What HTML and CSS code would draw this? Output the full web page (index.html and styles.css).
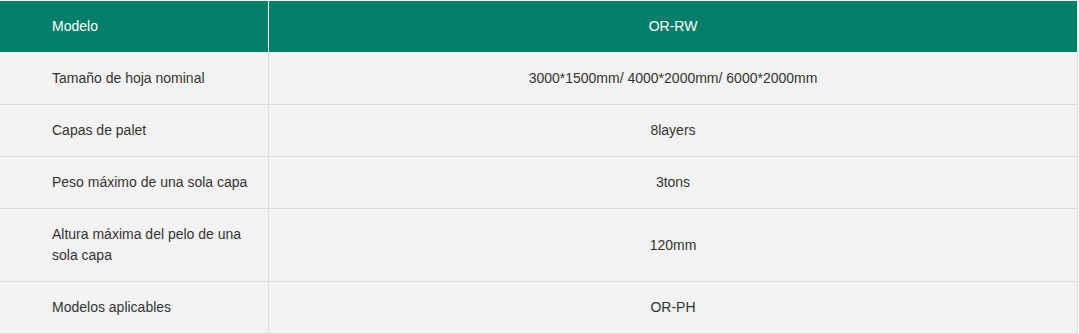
FILE: index.html
```html
<!DOCTYPE html>
<html lang="es">
<head>
<meta charset="utf-8">
<link rel="stylesheet" href="styles.css">
</head>
<body>
<table class="spec">
  <thead>
    <tr><th class="label">Modelo</th><th class="value">OR-RW</th></tr>
  </thead>
  <tbody>
    <tr><td class="label">Tamaño de hoja nominal</td><td class="value">3000*1500mm/ 4000*2000mm/ 6000*2000mm</td></tr>
    <tr><td class="label">Capas de palet</td><td class="value">8layers</td></tr>
    <tr><td class="label">Peso máximo de una sola capa</td><td class="value">3tons</td></tr>
    <tr><td class="label">Altura máxima del pelo de una sola capa</td><td class="value">120mm</td></tr>
    <tr><td class="label">Modelos aplicables</td><td class="value">OR-PH</td></tr>
  </tbody>
</table>
</body>
</html>
```
FILE: styles.css
```css
html, body {
  margin: 0;
  padding: 0;
  background: #ffffff;
}
.spec {
  width: 1078px;
  border-collapse: collapse;
  font-family: "Liberation Sans", Arial, sans-serif;
  font-size: 14px;
  line-height: 21px;
  color: #333333;
  border-top: 1px solid #f4f4f4;
}
.spec th, .spec td {
  padding: 15px 6px 15px 52px;
  border: 1px solid #dcdcdc;
  vertical-align: middle;
  text-align: left;
}
.spec th {
  background: #017f68;
  color: #ffffff;
  font-weight: normal;
  border-color: #e6f2ef;
  border-top: none;
}
.spec th:first-child, .spec td:first-child {
  border-left: none;
}
.spec td {
  background: #f3f3f3;
}
.spec .label {
  width: 210px;
}
.spec .value {
  text-align: center;
  padding-left: 15px;
  padding-right: 15px;
}
```
